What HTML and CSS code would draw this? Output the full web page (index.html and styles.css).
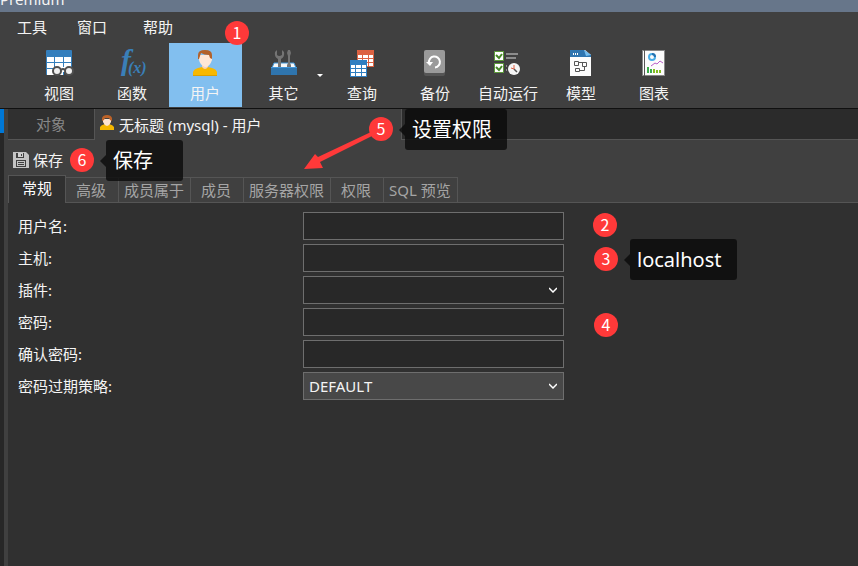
FILE: index.html
```html
<!DOCTYPE html>
<html lang="zh-CN">
<head>
<meta charset="utf-8">
<title>Premium</title>
<link rel="stylesheet" href="styles.css">
</head>
<body>
<header class="titlebar"><span>Premium</span></header>
<nav class="menubar">
  <button>工具</button>
  <button>窗口</button>
  <button class="menu-help">帮助</button>
</nav>
<div class="toolbar">
  <button class="tool">
    <svg viewBox="0 0 32 32"><rect x="3" y="3" width="26" height="25" rx="1" fill="#347fbd"/><path d="M4 10h7v5H4zM12 10h8v5h-8zM21 10h7v5h-7zM4 16h7v5H4zM12 16h8v5h-8zM21 16h7v5h-7zM4 22h7v6H4zM12 22h8v6h-8z" fill="#fff"/><path d="M21 22h8v6h-8z" fill="#404040"/><path d="M11 20h17v5H11z" fill="#fff"/><circle cx="14" cy="24" r="4" fill="#f0f0f0" stroke="#505050" stroke-width="2"/><circle cx="26" cy="24" r="4" fill="#f0f0f0" stroke="#505050" stroke-width="2"/><path d="M18 23q2-2 4 0" fill="none" stroke="#505050" stroke-width="2"/></svg>
    <span>视图</span>
  </button>
  <button class="tool">
    <svg viewBox="0 0 32 32"><text class="fx-large" x="5" y="23">f</text><text class="fx-small" x="12" y="26">(x)</text></svg>
    <span>函数</span>
  </button>
  <button class="tool selected">
    <svg viewBox="0 0 32 32"><path d="M4 29v-4q1-3 5-4l4-1h6l4 1q4 1 5 4v4z" fill="#f8b800"/><path d="M4 28h24v1H4z" fill="#dda000"/><path d="M13 16h6v4q-3 4-6 0z" fill="#f6d2bb"/><path d="M10 8h13v5q-2 6-6 7h-1q-5-2-6-7z" fill="#ffe7d6"/><path d="M9 12V8q0-5 7-5 7 0 7 5v4l-2-1-1-3q-5 0-8-2l-2 6z" fill="#b2622b"/></svg>
    <span>用户</span>
  </button>
  <button class="tool split">
    <svg viewBox="0 0 32 32"><path d="M6 16h20l2 5H4z" fill="#f8f8f8" stroke="#4298db" stroke-width="1"/><path d="M10 21V12q-4-2-3-7l2-2v5q2 2 5 0V3l2 2q1 5-3 7v9zM19 21v-3l1-2V9l-1-3 1-3h2l1 3-1 3v7l1 2v3z" fill="#747474"/><path d="M3 20h26v8H3z" fill="#2f75ae"/><path d="M3 20.500h26" stroke="#4298db"/></svg>
    <span>其它</span>
    <i class="drop-arrow"></i>
  </button>
  <button class="tool">
    <svg viewBox="0 0 32 32"><rect x="11" y="3" width="17" height="17" fill="#dc6242"/><path d="M12 8h4v3h-4zM17 8h5v3h-5zM23 8h4v3h-4zM12 12h4v3h-4zM17 12h5v3h-5zM23 12h4v3h-4zM12 16h4v3h-4zM17 16h5v3h-5zM23 16h4v3h-4z" fill="#fff"/><rect x="4" y="13" width="17" height="17" fill="#2e7ec1"/><path d="M5 18h4v3H5zM10 18h5v3h-5zM16 18h4v3h-4zM5 22h4v3H5zM10 22h5v3h-5zM16 22h4v3h-4zM5 26h4v3H5zM10 26h5v3h-5zM16 26h4v3h-4z" fill="#fff"/></svg>
    <span>查询</span>
  </button>
  <button class="tool">
    <svg viewBox="0 0 32 32"><rect x="5" y="6" width="21" height="23" rx="2" fill="#555"/><rect x="5" y="3" width="21" height="23" rx="2" fill="#9a9a9a"/><path d="M10 16a5.500 5.500 0 1 1 6 4.500" fill="none" stroke="#fff" stroke-width="2"/><path d="M7 15h7l-3 4z" fill="#fff"/></svg>
    <span>备份</span>
  </button>
  <button class="tool">
    <svg viewBox="0 0 32 32"><path d="M2.500 4.500h9v9h-9zM2.500 16.500h9v9h-9z" fill="#fff" stroke="#5b9a38"/><path d="M4 8l3 3 3-4M4 20l3 3 3-4" fill="none" stroke="#468827" stroke-width="2"/><path d="M14 7h12M14 11h10M14 19h1M14 23h1" stroke="#8c8c8c" stroke-width="2"/><circle cx="22" cy="22" r="6" fill="#f6f6f6"/><path d="M22 22l3 3" stroke="#555" stroke-width="1.500"/><path d="M22 18v4l-3-1" fill="none" stroke="#df6044"/></svg>
    <span>自动运行</span>
  </button>
  <button class="tool">
    <svg viewBox="0 0 32 32"><path d="M5 3h15l6 5v21H5z" fill="#fcfcfc"/><path d="M5 3h14l7 5v2H5z" fill="#2e75b0"/><path d="M19 3l7 5-5 1z" fill="#74bdef"/><path d="M8 6h1v2H8zM10 6h1v2h-1zM12 6h1v2h-1z" fill="#fff"/><path d="M9.500 14.500h4v4h-4zM17.500 15.500h4v4h-4zM10.500 21.500h4v3h-4zM14 15.500h4M15 23.500h4.500V20" fill="none" stroke="#555"/></svg>
    <span>模型</span>
  </button>
  <button class="tool">
    <svg viewBox="0 0 32 32"><rect x="4.500" y="3.500" width="22" height="25" fill="#fcfcfc" stroke="#888"/><path d="M6.500 3v26" stroke="#555"/><circle cx="14" cy="10" r="3" fill="none" stroke="#4aaee8" stroke-width="2"/><path d="M14 7a3 3 0 0 1 3 3" fill="none" stroke="#2772b0" stroke-width="2"/><path d="M13 19l4-3 2 1 3-3 3 2" fill="none" stroke="#b95fc8"/><path d="M9 20h2v6H9zM12 22h2v4h-2z" fill="#3cac4b"/><path d="M15 22h2v4h-2zM18 23h2v3h-2zM21 23h2v3h-2z" fill="#84bc24"/></svg>
    <span>图表</span>
  </button>
</div>
<div class="workspace">
  <aside class="rail"></aside>
  <main class="document">
    <div class="doc-tabs">
      <button class="doc-tab objects">对象</button>
      <button class="doc-tab current">
        <svg viewBox="0 0 16 16"><path d="M1 15v-3q1-2 5-3h4q4 1 5 3v3z" fill="#f5b700"/><path d="M4 4h8v3q-1 3-4 4-3-1-4-4z" fill="#ffe3ce"/><path d="M3 6V3q1-3 5-3t5 3v3l-2-1-1-2H6L5 5z" fill="#bc6228"/></svg>
        <span>无标题 (mysql) - 用户</span>
      </button>
      <div class="tab-space"></div>
    </div>
    <div class="actions">
      <button class="save">
        <svg viewBox="0 0 16 16"><path d="M0 0h13l3 3v13H0z" fill="#c4c4c4"/><path d="M3 1h8v5H3z" fill="#404040"/><path d="M5 1h5v4H5z" fill="#d0d0d0"/><path d="M8 2h1v2H8zM3 8h10v7H3z" fill="#404040"/><path d="M4 9h8v5H4z" fill="#c4c4c4"/><path d="M5 10.500h6M5 12.500h6" stroke="#404040"/></svg>
        <span>保存</span>
      </button>
    </div>
    <div class="tabs">
      <button class="tab active">常规</button>
      <button class="tab">高级</button>
      <button class="tab">成员属于</button>
      <button class="tab">成员</button>
      <button class="tab">服务器权限</button>
      <button class="tab">权限</button>
      <button class="tab">SQL 预览</button>
      <div class="tabs-rest"></div>
    </div>
    <form class="form">
      <label for="user">用户名:</label><input id="user" type="text">
      <label for="host">主机:</label><input id="host" type="text">
      <label for="plugin">插件:</label>
      <div class="select-box"><select id="plugin"><option></option></select><svg viewBox="0 0 8 6"><path d="M0 1l4 4 4-4"/></svg></div>
      <label for="password">密码:</label><input id="password" type="password">
      <label for="confirm">确认密码:</label><input id="confirm" type="password">
      <label for="expiry">密码过期策略:</label>
      <div class="select-box filled"><select id="expiry"><option>DEFAULT</option></select><svg viewBox="0 0 8 6"><path d="M0 1l4 4 4-4"/></svg></div>
    </form>
  </main>
</div>
<div class="notes">
  <svg class="pointer" viewBox="0 0 72 40"><path d="M1 38L12 23l3 3L68 1l3 3-54 27 3 6z" fill="#ff3939"/></svg>
  <span class="badge n1">1</span>
  <span class="badge n2">2</span>
  <span class="badge n3">3</span>
  <span class="badge n4">4</span>
  <span class="badge n5">5</span>
  <span class="badge n6">6</span>
  <span class="tip t3">localhost</span>
  <span class="tip t5">设置权限</span>
  <span class="tip t6">保存</span>
</div>
</body>
</html>
```
FILE: styles.css
```css
* { box-sizing: border-box; }

body {
  position: relative;
  display: flex;
  flex-direction: column;
  min-height: 100vh;
  margin: 0;
  overflow-x: hidden;
  background: #404040;
  color: #f4f4f4;
  font: 15px/20px "Noto Sans", "Noto Sans CJK SC", sans-serif;
}

button, input, select {
  margin: 0;
  padding: 0;
  border: 0;
  border-radius: 0;
  background: none;
  color: inherit;
  font: inherit;
}

svg { display: block; flex: none; }

.titlebar {
  display: flex;
  align-items: flex-end;
  height: 12px;
  overflow: hidden;
  background: #67768a;
}
.titlebar span { line-height: 26px; }

.menubar {
  display: flex;
  gap: 30px;
  height: 31px;
  padding: 0 17px 2px;
}
.menu-help { margin-left: 6px; }

.toolbar {
  display: flex;
  height: 66px;
  padding-left: 23px;
  border-bottom: 1px solid #101010;
}
.tool {
  position: relative;
  display: flex;
  flex-direction: column;
  align-items: center;
  flex: none;
  gap: 4px;
  width: 73px;
  height: 64px;
  padding: 4px 1px 0 0;
  white-space: nowrap;
}
.tool svg { width: 32px; height: 32px; overflow: visible; }
.tool.selected { background: #82bfef; }
.tool.split { width: 84px; }
.drop-arrow {
  position: absolute;
  right: 3px;
  top: 31px;
  border: 3px solid transparent;
  border-top-color: #fff;
  border-bottom: 0;
}
.fx-large, .fx-small {
  fill: #3a7fb8;
  font-family: "Liberation Serif", serif;
  font-style: italic;
}
.fx-large { font-size: 30px; font-weight: bold; }
.fx-small { font-size: 16px; font-weight: bold; }

.workspace { display: flex; flex: 1; }
.rail {
  width: 4px;
  background: linear-gradient(#0078d7 24px, #272727 24px);
}
.document {
  display: flex;
  flex-direction: column;
  flex: 1;
  min-width: 0;
  margin-left: 4px;
}

.doc-tabs { display: flex; height: 31px; }
.doc-tab { display: flex; align-items: center; }
.objects {
  justify-content: center;
  width: 87px;
  border-right: 1px solid #555;
  border-bottom: 1px solid #555;
  background: #303030;
  color: #888;
}
.current { gap: 4px; width: 306px; padding-left: 4px; }
.current svg { width: 16px; height: 16px; margin-bottom: 4px; }
.tab-space {
  flex: 1;
  border-left: 1px solid #555;
  border-bottom: 1px solid #555;
  background: #2b2b2b;
}

.actions { height: 35px; padding: 10px 5px; }
.save { display: flex; align-items: center; gap: 4px; }
.save svg { width: 16px; height: 16px; }

.tabs { display: flex; align-items: flex-end; height: 28px; }
.tab {
  height: 26px;
  padding: 0 6px 0 5px;
  border: 1px solid #555;
  border-left: 0;
  color: #a5a5a5;
  white-space: nowrap;
}
.tab:nth-child(2), .tab:nth-child(4), .tab:nth-child(6) { padding: 0 12px 0 10px; }
.tab.active {
  height: 28px;
  padding: 0 13px 4px;
  border-left: 1px solid #555;
  border-bottom: 0;
  background: #303030;
  color: #fff;
}
.tabs-rest { flex: 1; border-bottom: 1px solid #555; }

.form {
  display: grid;
  flex: 1;
  grid-template-columns: 285px minmax(120px, 261px);
  grid-auto-rows: 28px;
  align-content: start;
  align-items: center;
  row-gap: 4px;
  padding: 9px 10px;
  background: #303030;
}
.form input, .select-box {
  width: 100%;
  height: 28px;
  border: 1px solid #6e6e6e;
  background: #282828;
}
.form input { padding: 0 5px; }
.select-box { position: relative; }
.select-box.filled { background: #484848; }
.select-box select {
  width: 100%;
  height: 26px;
  padding: 0 5px;
  appearance: none;
}
.select-box svg {
  position: absolute;
  top: 10px;
  right: 6px;
  width: 8px;
  height: 6px;
  fill: none;
  stroke: #fff;
  stroke-width: 1.5;
  pointer-events: none;
}

.notes { position: absolute; inset: 0; pointer-events: none; }
.pointer { position: absolute; left: 303px; top: 131px; width: 72px; height: 40px; }
.badge {
  position: absolute;
  width: 24px;
  height: 24px;
  border-radius: 50%;
  background: #ff3939;
  color: #fff;
  font-family: "Noto Sans CJK SC", sans-serif;
  font-size: 16px;
  line-height: 23px;
  text-align: center;
}
.n1 { left: 225px; top: 21px; }
.n2 { left: 593px; top: 213px; }
.n3 { left: 594px; top: 247px; }
.n4 { left: 594px; top: 313px; }
.n5 { left: 369px; top: 117px; }
.n6 { left: 70px; top: 148px; }

.tip {
  position: absolute;
  height: 41px;
  padding: 0 15px 0 7px;
  border-radius: 3px;
  background: rgba(10, 10, 10, 0.8);
  color: #fff;
  font-size: 20px;
  line-height: 41px;
}
.tip::before {
  content: "";
  position: absolute;
  left: -6px;
  top: 15px;
  border: 6px solid transparent;
  border-right-color: rgba(10, 10, 10, 0.8);
  border-left: 0;
}
.t3 { left: 630px; top: 239px; }
.t5 { left: 405px; top: 109px; }
.t6 { left: 106px; top: 140px; padding-right: 30px; }
```
